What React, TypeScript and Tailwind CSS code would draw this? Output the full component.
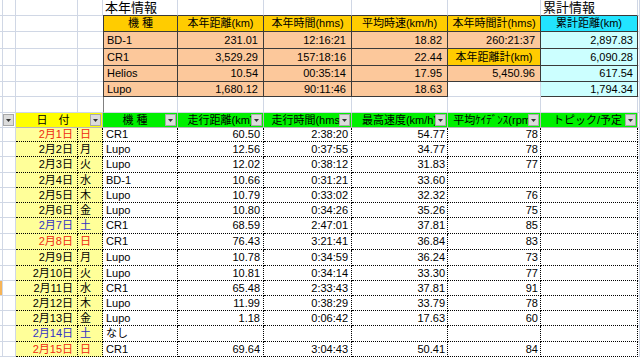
import React from "react";

const W = {
  a0: "w-[3px]",
  a: "w-[13px]",
  b: "w-[62px]",
  c: "w-[25px]",
  bc: "w-[87px]",
  d: "w-[75px]",
  e: "w-[86px]",
  f: "w-[88px]",
  g: "w-[96px]",
  h: "w-[93px]",
  i: "w-[97px]",
};

const grid = "border-r border-b border-[#d0d7e5]";
const dot = "border-r border-b border-dotted border-black";
const dark = "border-r border-b border-[#3a3a3a]";
const cell = "shrink-0 flex items-center whitespace-nowrap overflow-hidden text-[11px] leading-none";

const gold = "bg-[#ffcc00]";
const tan = "bg-[#fcc89b]";

type Top = { t: string; k: "tan" | "gold" | "blank" };

const topRows: { name: string; h: string; v: string[]; mid: Top; sum: string }[] = [
  { name: "BD-1", h: "h-[17px]", v: ["231.01", "12:16:21", "18.82"], mid: { t: "260:21:37", k: "tan" }, sum: "2,897.83" },
  { name: "CR1", h: "h-[17px]", v: ["3,529.29", "157:18:16", "22.44"], mid: { t: "本年距離計(km)", k: "gold" }, sum: "6,090.28" },
  { name: "Helios", h: "h-[16px]", v: ["10.54", "00:35:14", "17.95"], mid: { t: "5,450.96", k: "tan" }, sum: "617.54" },
  { name: "Lupo", h: "h-[15px]", v: ["1,680.12", "90:11:46", "18.63"], mid: { t: "", k: "blank" }, sum: "1,794.34" },
];

// date, weekday, model, km, time, max, cadence
const days: string[][] = [
  ["2月1日", "日", "CR1", "60.50", "2:38:20", "54.77", "78"],
  ["2月2日", "月", "Lupo", "12.56", "0:37:55", "34.77", "78"],
  ["2月3日", "火", "Lupo", "12.02", "0:38:12", "31.83", "77"],
  ["2月4日", "水", "BD-1", "10.66", "0:31:21", "33.60", ""],
  ["2月5日", "木", "Lupo", "10.79", "0:33:02", "32.32", "76"],
  ["2月6日", "金", "Lupo", "10.80", "0:34:26", "35.26", "75"],
  ["2月7日", "土", "CR1", "68.59", "2:47:01", "37.81", "85"],
  ["2月8日", "日", "CR1", "76.43", "3:21:41", "36.84", "83"],
  ["2月9日", "月", "Lupo", "10.78", "0:34:59", "36.24", "73"],
  ["2月10日", "火", "Lupo", "10.81", "0:34:14", "33.30", "77"],
  ["2月11日", "水", "CR1", "65.48", "2:33:43", "37.81", "91"],
  ["2月12日", "木", "Lupo", "11.99", "0:38:29", "33.79", "78"],
  ["2月13日", "金", "Lupo", "1.18", "0:06:42", "17.63", "60"],
  ["2月14日", "土", "なし", "", "", "", ""],
  ["2月15日", "日", "CR1", "69.64", "3:04:43", "50.41", "84"],
];

const dayHeights = [
  "h-[14px]", "h-[15px]", "h-[16px]", "h-[15px]", "h-[15px]",
  "h-[15px]", "h-[16px]", "h-[16px]", "h-[16px]", "h-[15px]",
  "h-[15px]", "h-[15px]", "h-[15px]", "h-[16px]", "h-[15px]",
];

function Drop() {
  return (
    <span className="absolute right-[1px] top-[1px] bottom-[1px] w-[11px] bg-[#dcdcdc] border border-[#a8a8a8] flex items-center justify-center">
      <svg width="5" height="3" viewBox="0 0 5 3">
        <path d="M0 0h5L2.5 3z" fill="#333" />
      </svg>
    </span>
  );
}

function LeftGrid({ edge = true, hl = false }: { edge?: boolean; hl?: boolean }) {
  return (
    <>
      <div className={`${W.a0} shrink-0 ${grid} ${hl ? "bg-[#f7b456]" : ""}`} />
      <div className={`${W.a} shrink-0 ${grid}`} />
      <div className={`${W.b} shrink-0 ${grid}`} />
      <div className={`${W.c} shrink-0 border-b border-[#d0d7e5] ${edge ? "border-r" : ""}`} />
    </>
  );
}

function HeadCell({ w, bg, children, right = false }: { w: string; bg: string; children: React.ReactNode; right?: boolean }) {
  return (
    <div className={`${w} ${bg} relative shrink-0 h-full border-r border-b border-[#b8b8b8] overflow-hidden`}>
      <div className={`flex h-full items-center whitespace-nowrap text-[11px] leading-none ${right ? "justify-end pr-[15px]" : "justify-center"}`}>
        {children}
      </div>
      <Drop />
    </div>
  );
}

export default function App() {
  return (
    <div className="w-[640px] h-[360px] overflow-hidden bg-white text-black font-['Liberation_Sans','Noto_Sans_CJK_JP',sans-serif]">
      {/* title row */}
      <div className="flex h-[16px]">
        <LeftGrid />
        <div className={`${W.d} ${cell} ${grid} border-b-[#3a3a3a] pl-[2px] text-[13px] overflow-visible`}>本年情報</div>
        <div className={`${W.e} shrink-0 ${grid} border-b-[#3a3a3a]`} />
        <div className={`${W.f} shrink-0 ${grid} border-b-[#3a3a3a]`} />
        <div className={`${W.g} shrink-0 ${grid} border-b-[#3a3a3a]`} />
        <div className={`${W.h} shrink-0 ${grid} border-b-[#3a3a3a]`} />
        <div className={`${W.i} ${cell} ${grid} border-b-[#3a3a3a] pl-[2px] text-[13px]`}>累計情報</div>
        <div className={`flex-1 ${grid}`} />
      </div>

      {/* top header */}
      <div className="flex h-[16px]">
        <LeftGrid edge={false} />
        <div className={`${W.d} ${cell} ${dark} border-l ${gold} justify-center`}>機 種</div>
        <div className={`${W.e} ${cell} ${dark} ${gold} justify-center`}>本年距離(km)</div>
        <div className={`${W.f} ${cell} ${dark} ${gold} justify-center`}>本年時間(hms)</div>
        <div className={`${W.g} ${cell} ${dark} ${gold} justify-center`}>平均時速(km/h)</div>
        <div className={`${W.h} ${cell} ${dark} ${gold} justify-center`}>本年時間計(hms)</div>
        <div className={`${W.i} ${cell} ${dark} bg-[#22e4ff] justify-center`}>累計距離(km)</div>
        <div className={`flex-1 ${grid}`} />
      </div>

      {topRows.map((r) => (
        <div key={r.name} className={`flex ${r.h}`}>
          <LeftGrid edge={false} />
          <div className={`${W.d} ${cell} ${dark} border-l ${tan} pl-[3px]`}>{r.name}</div>
          <div className={`${W.e} ${cell} ${dark} ${tan} justify-end pr-[5px]`}>{r.v[0]}</div>
          <div className={`${W.f} ${cell} ${dark} ${tan} justify-end pr-[5px]`}>{r.v[1]}</div>
          <div className={`${W.g} ${cell} ${dark} ${tan} justify-end pr-[5px]`}>{r.v[2]}</div>
          {r.mid.k === "gold" && (
            <div className={`${W.h} ${cell} ${dark} ${gold} justify-center`}>{r.mid.t}</div>
          )}
          {r.mid.k === "tan" && (
            <div className={`${W.h} ${cell} ${dark} ${tan} justify-end pr-[5px]`}>{r.mid.t}</div>
          )}
          {r.mid.k === "blank" && <div className={`${W.h} shrink-0 ${grid}`} />}
          <div className={`${W.i} ${cell} ${dark} bg-[#ccffff] justify-end pr-[4px]`}>{r.sum}</div>
          <div className={`flex-1 ${grid}`} />
        </div>
      ))}

      {/* spacer row */}
      <div className="flex h-[16px]">
        <LeftGrid edge={false} />
        <div className={`${W.d} shrink-0 ${grid} border-l border-l-[#808080]`} />
        <div className={`${W.e} shrink-0 ${grid}`} />
        <div className={`${W.f} shrink-0 ${grid}`} />
        <div className={`${W.g} shrink-0 ${grid}`} />
        <div className={`${W.h} shrink-0 ${grid}`} />
        <div className={`${W.i} shrink-0 ${grid}`} />
        <div className={`flex-1 ${grid}`} />
      </div>

      {/* filter header */}
      <div className="flex h-[15px]">
        <div className={`${W.a0} shrink-0 ${grid}`} />
        <div className={`${W.a} relative shrink-0 ${grid}`}>
          <Drop />
        </div>
        <HeadCell w={W.bc} bg="bg-[#ffff00]">
          <span className="pr-[12px]">日　付</span>
        </HeadCell>
        <HeadCell w={W.d} bg="bg-[#00f000]">
          <span className="pr-[10px]">機 種</span>
        </HeadCell>
        <HeadCell w={W.e} bg="bg-[#00f000]">走行距離(km)</HeadCell>
        <HeadCell w={W.f} bg="bg-[#00f000]">走行時間(hms)</HeadCell>
        <HeadCell w={W.g} bg="bg-[#00f000]">最高速度(km/h)</HeadCell>
        <HeadCell w={W.h} bg="bg-[#00f000]">平均ｹｲﾃﾞﾝｽ(rpm)</HeadCell>
        <HeadCell w={W.i} bg="bg-[#00f000]" right>
          トピック/予定
        </HeadCell>
        <div className={`flex-1 ${grid}`} />
      </div>

      {days.map((d, idx) => {
        const tone = d[1] === "日" ? "text-[#ee2a10]" : d[1] === "土" ? "text-[#3232c4]" : "text-black";
        return (
          <div key={d[0]} className={`flex ${dayHeights[idx]}`}>
            <div className={`${W.a0} shrink-0 ${grid} ${idx === 10 ? "bg-[#f7b456]" : ""}`} />
            <div className={`${W.a} shrink-0 ${grid}`} />
            <div className={`${W.b} ${cell} ${dot} bg-[#ffff99] justify-end pr-[4px] ${tone}`}>{d[0]}</div>
            <div className={`${W.c} ${cell} ${dot} bg-[#ffff99] pl-[2px] ${tone}`}>{d[1]}</div>
            <div className={`${W.d} ${cell} ${dot} pl-[3px]`}>{d[2]}</div>
            <div className={`${W.e} ${cell} ${dot} justify-end pr-[3px]`}>{d[3]}</div>
            <div className={`${W.f} ${cell} ${dot} justify-end pr-[3px]`}>{d[4]}</div>
            <div className={`${W.g} ${cell} ${dot} justify-end pr-[2px]`}>{d[5]}</div>
            <div className={`${W.h} ${cell} ${dot} justify-end pr-[2px]`}>{d[6]}</div>
            <div className={`${W.i} shrink-0 ${dot}`} />
            <div className={`flex-1 ${grid}`} />
          </div>
        );
      })}
    </div>
  );
}
